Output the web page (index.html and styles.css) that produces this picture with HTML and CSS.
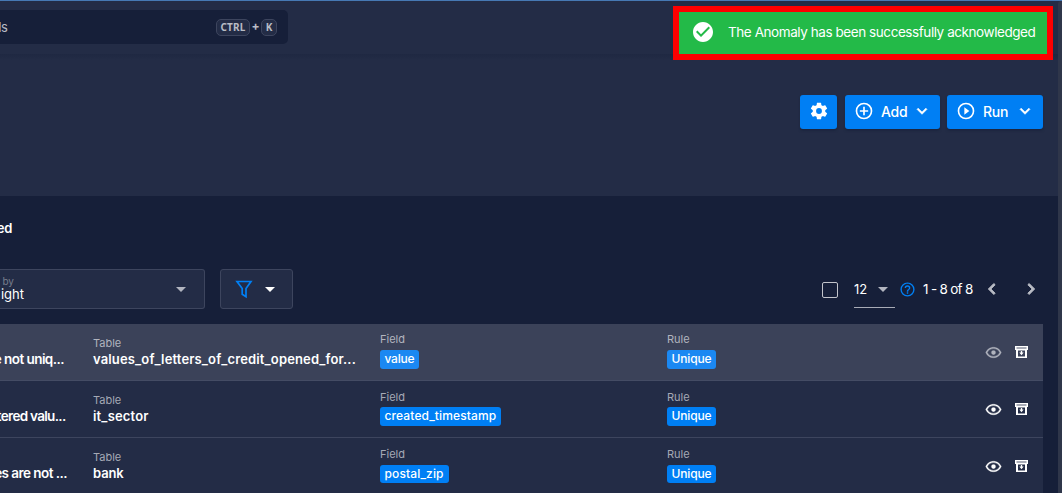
FILE: index.html
```html
<!DOCTYPE html>
<html lang="en">
<head>
<meta charset="utf-8">
<title>Anomalies</title>
<link rel="stylesheet" href="styles.css">
</head>
<body>
<svg class="defs" width="0" height="0">
  <symbol id="eye" viewBox="0 0 24 24"><path d="M12 9a3 3 0 0 1 3 3 3 3 0 0 1-3 3 3 3 0 0 1-3-3 3 3 0 0 1 3-3m0-4.500c5 0 9.270 3.110 11 7.500-1.730 4.390-6 7.500-11 7.500S2.730 16.390 1 12c1.730-4.390 6-7.500 11-7.500M3.180 12a9.821 9.821 0 0 0 17.640 0 9.821 9.821 0 0 0-17.640 0"/></symbol>
  <symbol id="archive" viewBox="0 0 13 12"><path d="M0 0h13v4h-1v8H1V4H0zM3 4.500v6h7v-6z" fill-rule="evenodd"/><path d="M1.500 1h10v2h-10z" fill="#a9acb7"/><path d="M5.800 5h1.400v1.500h1.500L6.500 9.300 4.300 6.500h1.500z"/></symbol>
  <symbol id="chevron" viewBox="0 0 24 24"><path d="M7.410 8.580 12 13.170l4.590-4.590L18 10l-6 6-6-6z"/></symbol>
  <symbol id="caret" viewBox="0 0 24 24"><path d="m7 10 5 5 5-5z"/></symbol>
</svg>
<div class="app">
  <header class="topbar">
    <div class="search"><span class="search-text">ds</span>
      <div class="keys"><kbd class="ctrl">CTRL</kbd><span class="plus">+</span><kbd class="k">K</kbd></div>
    </div>
  </header>
  <section class="hero">
    <button class="btn settings"><svg width="20" height="20" viewBox="0 0 24 24"><path d="M12 15.500A3.500 3.500 0 0 1 8.500 12 3.500 3.500 0 0 1 12 8.500a3.500 3.500 0 0 1 3.500 3.500 3.500 3.500 0 0 1-3.500 3.500m7.430-2.530c.040-.320.070-.640.070-.970s-.030-.660-.070-1l2.110-1.630c.190-.150.240-.420.120-.640l-2-3.460c-.120-.220-.390-.310-.610-.220l-2.490 1c-.520-.390-1.060-.730-1.690-.980l-.370-2.650A.506.506 0 0 0 14 2h-4c-.250 0-.460.180-.500.420l-.370 2.650c-.630.250-1.170.590-1.690.980l-2.490-1c-.220-.090-.490 0-.610.220l-2 3.460c-.130.220-.070.490.120.640L4.570 11c-.040.340-.070.670-.070 1s.030.650.070.970l-2.110 1.660c-.190.150-.250.420-.120.640l2 3.460c.120.220.390.300.610.220l2.490-1.010c.520.400 1.060.740 1.690.990l.370 2.650c.040.240.250.420.500.420h4c.250 0 .460-.180.500-.420l.370-2.650c.630-.260 1.170-.590 1.690-.990l2.490 1.010c.220.080.490 0 .610-.220l2-3.460c.120-.220.070-.490-.120-.640z"/></svg></button>
    <button class="btn add"><svg width="20" height="20" viewBox="0 0 24 24"><path d="M12 20c-4.410 0-8-3.590-8-8s3.590-8 8-8 8 3.590 8 8-3.590 8-8 8m0-18A10 10 0 0 0 2 12a10 10 0 0 0 10 10 10 10 0 0 0 10-10A10 10 0 0 0 12 2m1 5h-2v4H7v2h4v4h2v-4h4v-2h-4z"/></svg><span class="btn-label">Add</span><svg class="btn-chevron" width="20" height="20"><use href="#chevron"/></svg></button>
    <button class="btn run"><svg width="20" height="20" viewBox="0 0 24 24"><path d="M12 20c-4.410 0-8-3.590-8-8s3.590-8 8-8 8 3.590 8 8-3.590 8-8 8m0-18A10 10 0 0 0 2 12a10 10 0 0 0 10 10 10 10 0 0 0 10-10A10 10 0 0 0 12 2m-2 14.500 6-4.500-6-4.500z"/></svg><span class="btn-label">Run</span><svg class="btn-chevron" width="20" height="20"><use href="#chevron"/></svg></button>
  </section>
  <main class="content">
    <div class="tab"><span>ed</span></div>
    <div class="toolbar">
      <div class="select"><div class="select-copy"><span class="select-label">t by</span><span class="select-value">ight</span></div><svg width="24" height="24"><use href="#caret"/></svg></div>
      <div class="filter"><svg width="18" height="20" viewBox="0 0 18 20" class="funnel"><path d="M2 2.500h14l-5 7v8.200l-3.800-2.500V9.500z"/></svg><svg width="24" height="24"><use href="#caret"/></svg></div>
      <div class="pager">
        <span class="checkbox"></span>
        <div class="page-size"><span>12</span><svg width="24" height="24"><use href="#caret"/></svg></div>
        <svg class="help" width="17" height="17" viewBox="0 0 24 24"><path d="M11 18h2v-2h-2zm1-16A10 10 0 0 0 2 12a10 10 0 0 0 10 10 10 10 0 0 0 10-10A10 10 0 0 0 12 2m0 18c-4.410 0-8-3.590-8-8s3.590-8 8-8 8 3.590 8 8-3.590 8-8 8m0-14a4 4 0 0 0-4 4h2a2 2 0 0 1 2-2 2 2 0 0 1 2 2c0 2-3 1.750-3 5h2c0-2.250 3-2.500 3-5a4 4 0 0 0-4-4"/></svg>
        <span class="range">1 - 8 of 8</span>
        <svg class="prev" width="22" height="22"><use href="#chevron"/></svg>
        <svg class="next" width="22" height="22"><use href="#chevron"/></svg>
      </div>
    </div>
    <div class="rows">
      <div class="row active">
        <div class="summary end-a"><span>e not uniq...</span></div>
        <div class="table-cell"><span class="label">Table</span><span class="value long">values_of_letters_of_credit_opened_for...</span></div>
        <div class="chip-cell"><span class="label">Field</span><span class="chip w-value">value</span></div>
        <div class="chip-cell"><span class="label">Rule</span><span class="chip w-unique">Unique</span></div>
        <div class="actions"><svg class="eye" width="17" height="17"><use href="#eye"/></svg><svg width="13" height="12"><use href="#archive"/></svg></div>
      </div>
      <div class="row">
        <div class="summary end-b"><span>tered valu...</span></div>
        <div class="table-cell"><span class="label">Table</span><span class="value">it_sector</span></div>
        <div class="chip-cell"><span class="label">Field</span><span class="chip w-created">created_timestamp</span></div>
        <div class="chip-cell"><span class="label">Rule</span><span class="chip w-unique">Unique</span></div>
        <div class="actions"><svg class="eye" width="17" height="17"><use href="#eye"/></svg><svg width="13" height="12"><use href="#archive"/></svg></div>
      </div>
      <div class="row last">
        <div class="summary end-c"><span>es are not ...</span></div>
        <div class="table-cell"><span class="label">Table</span><span class="value">bank</span></div>
        <div class="chip-cell"><span class="label">Field</span><span class="chip w-postal">postal_zip</span></div>
        <div class="chip-cell"><span class="label">Rule</span><span class="chip w-unique">Unique</span></div>
        <div class="actions"><svg class="eye" width="17" height="17"><use href="#eye"/></svg><svg width="13" height="12"><use href="#archive"/></svg></div>
      </div>
    </div>
  </main>
</div>
<div class="scrollbar"></div>
<div class="toast"><svg width="24" height="24" viewBox="0 0 24 24"><path d="M12 2C6.500 2 2 6.500 2 12s4.500 10 10 10 10-4.500 10-10S17.500 2 12 2m-2 15-5-5 1.410-1.410L10 14.170l7.590-7.590L19 8z"/></svg><span>The Anomaly has been successfully acknowledged</span></div>
</body>
</html>
```
FILE: styles.css
```css
* { box-sizing: border-box; }
body { margin: 0; width: 1062px; height: 493px; overflow: hidden; background: #161f39; color: #fff; font-family: Inter, "Liberation Sans", sans-serif; font-size: 13px; }
svg { display: block; flex: none; fill: currentColor; }
span { white-space: nowrap; }
.defs { position: absolute; }
.app { height: 493px; display: flex; flex-direction: column; overflow: hidden; }
.topbar { height: 54px; flex: none; background: #232c46; border-top: 1px solid #4679b4; padding-top: 9px; }
.search { width: 288px; height: 34px; background: #161f39; border-radius: 0 5px 5px 0; display: flex; align-items: center; justify-content: space-between; padding-right: 11px; color: #b9bcc5; }
.search-text { width: 7.5px; display: flex; justify-content: flex-end; font-size: 13px; letter-spacing: -.4px; }
.keys { display: flex; align-items: center; }
kbd { height: 17px; border: 1px solid #3d455e; border-radius: 5px; background: #232c46; font: 700 10px/15px "Noto Sans", sans-serif; text-align: center; }
.ctrl { width: 34px; letter-spacing: .2px; }
.k { width: 16px; }
.plus { width: 11px; text-align: center; font-weight: 700; font-size: 12px; line-height: 14px; padding-bottom: 2px; }
.hero { height: 142px; flex: none; background: linear-gradient(#1f2842, #232c46 6px); display: flex; justify-content: flex-end; gap: 7px; padding: 41px 19px 0 0; }
.btn { height: 34px; border: 0; border-radius: 3px; background: #007ff4; color: #fff; display: flex; align-items: center; padding: 0 8px 2px 9px; font: 500 14px Inter, sans-serif; letter-spacing: -.2px; box-shadow: 0 2px 2px #161f3980; }
.settings { width: 37px; margin-right: 1px; }
.add { width: 95px; }
.run { width: 96px; }
.btn-label { margin-left: 7px; }
.btn-chevron { margin-left: auto; stroke: currentColor; stroke-width: .7; }
.content { flex: 1; }
.tab { height: 73px; padding-top: 23px; font-weight: 600; line-height: 18px; }
.tab span { width: 12px; display: flex; justify-content: flex-end; letter-spacing: -.3px; }
.toolbar { height: 55px; display: flex; align-items: flex-start; }
.select, .filter { height: 40px; background: #232c46; border: 1px solid #3d455e; border-radius: 3px; display: flex; align-items: center; }
.select { width: 205px; border-left: 0; border-radius: 0 3px 3px 0; justify-content: space-between; padding-right: 11px; color: #b2b5c0; }
.select-copy { width: 24px; display: flex; flex-direction: column; align-items: flex-end; padding-bottom: 2px; }
.select-label { font-size: 10px; line-height: 12px; color: #777d8d; padding-right: 10px; }
.select-value { font-size: 13px; line-height: 14px; color: #fff; }
.filter { width: 73px; margin-left: 15px; padding-left: 14px; gap: 5px; }
.funnel { fill: none; stroke: #0080f5; stroke-width: 1.7; }
.pager { height: 40px; margin-left: 529px; display: flex; align-items: center; }
.checkbox { width: 16px; height: 16px; border: 1px solid #c2c4cb; border-radius: 2px; margin-top: 2px; }
.page-size { width: 41px; height: 38px; margin-left: 16px; border-bottom: 1px solid #a8abb6; display: flex; align-items: center; justify-content: space-between; font-size: 13px; padding-top: 1px; }
.page-size svg { color: #b2b5c0; }
.help { color: #0080f5; margin-left: 3.500px; }
.range { width: 50px; margin-left: 7.500px; font-size: 13.500px; letter-spacing: -.850px; word-spacing: .3px; padding-bottom: 1px; }
.prev, .next { color: #b9bcc5; stroke: currentColor; stroke-width: 1; }
.prev { transform: rotate(90deg); margin-left: 8px; }
.next { transform: rotate(-90deg); margin-left: 17px; }
.rows { width: 1043px; }
.row { height: 57px; background: #232c46; border-bottom: 1px solid #3d455e; display: grid; grid-template-columns: 93px 287px 287px 287px 1fr; }
.active { background: #3b4259; border-color: #444c64; }
.summary { display: flex; justify-content: flex-end; overflow: hidden; padding-top: 27px; font-size: 13.500px; line-height: 16px; font-weight: 600; letter-spacing: -.550px; }
.end-a { width: 64px; } .end-b { width: 65.500px; letter-spacing: -.700px; } .end-c { width: 67px; }
.table-cell, .chip-cell { display: flex; flex-direction: column; align-items: flex-start; }
.table-cell { padding-top: 12px; }
.chip-cell { padding-top: 8px; }
.row:not(.active) .chip-cell .label { padding-top: 1px; }
.row.last .chip-cell .label { height: 19px; }
.label { font-size: 11px; line-height: 15px; color: #a5a9b5; }
.active .label { color: #b1b4be; }
.chip-cell .label { height: 18px; }
.value { font-size: 13px; line-height: 16px; font-weight: 600; letter-spacing: .18px; }
.long { letter-spacing: .150px; }
.row.last .value { letter-spacing: -.1px; }
.chip { height: 19px; line-height: 18px; border-radius: 3px; padding-left: 4.500px; background: #007ff4; font-size: 12px; font-weight: 500; }
.last .chip { height: 18px; }
.active .chip { background: #1b88f2; }
.w-value { width: 39px; letter-spacing: -.250px; } .w-unique { width: 49px; letter-spacing: -.150px; } .w-created { width: 121px; letter-spacing: .120px; } .w-postal { width: 69px; letter-spacing: .120px; }
.actions { display: flex; align-items: center; padding-left: 30.500px; gap: 13.500px; }
.active .eye { color: #b1b4be; }
.eye { stroke: currentColor; stroke-width: .4; }
.scrollbar { position: absolute; right: 0; top: 1px; width: 4px; height: 492px; background: #2f364a; border-radius: 3px 0 0; }
.toast { position: absolute; left: 673px; top: 6px; width: 380px; height: 54px; border: 6px solid #ff0000; background: #23ba48; display: flex; align-items: center; padding: 0 0 2px 12px; gap: 13px; font-size: 13.500px; letter-spacing: -.430px; }
```
